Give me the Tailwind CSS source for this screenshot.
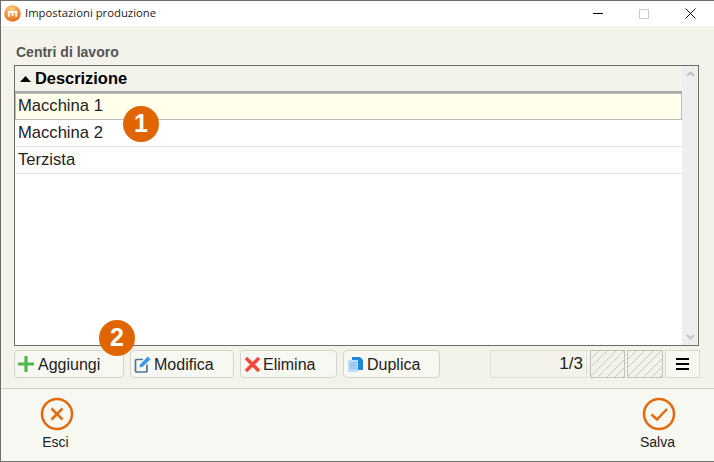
<!DOCTYPE html>
<html lang="en">
<head>
    <meta charset="UTF-8">
    <title>Impostazioni produzione</title>
    <script src="https://cdn.jsdelivr.net/npm/@tailwindcss/browser@4"></script>
</head>
<body class="m-0 overflow-hidden bg-white">
    <div class="relative w-[714px] h-[462px] flex flex-col border-t border-l border-b border-[#6e6e6e] font-['Liberation_Sans',Arial,sans-serif] text-[#111]">
        <!-- Title bar -->
        <div class="h-[25px] shrink-0 bg-white flex items-center">
            <svg class="ml-[3px] w-[17px] h-[17px]" viewBox="0 0 16 16">
                <defs>
                    <radialGradient id="logo" cx="0.45" cy="0.25" r="0.85">
                        <stop offset="0" stop-color="#ffd080"/>
                        <stop offset="1" stop-color="#dc5f0a"/>
                    </radialGradient>
                </defs>
                <circle cx="8" cy="8" r="7.8" fill="url(#logo)"/>
                <path d="M4.500 11V6.500h7V11M8 6.500V10" fill="none" stroke="#fff" stroke-width="1.700"/>
            </svg>
            <span class="ml-[4px] text-[11.3px] font-['Open_Sans',sans-serif] text-[#222]">Impostazioni produzione</span>
            <div class="ml-auto pr-[1px] flex items-center">
                <div class="w-[46px] flex justify-center"><div class="w-[10px] h-px bg-black"></div></div>
                <div class="w-[46px] flex justify-center"><div class="w-[10px] h-[10px] border border-[#ccc]"></div></div>
                <div class="w-[46px] flex justify-center">
                    <svg class="w-[11px] h-[11px]" viewBox="0 0 11 11"><path d="M.5.5l10 10M10.500.5l-10 10" stroke="#111" fill="none"/></svg>
                </div>
            </div>
        </div>

        <!-- Content -->
        <div class="flex-1 bg-[#f3f3eb] flex flex-col pl-[13px] pr-[14px]">
            <div class="h-[39px] shrink-0 pt-[18px] pl-[2px] text-[14px] leading-[17px] font-bold text-[#555]">Centri di lavoro</div>
            <!-- Table -->
            <div class="h-[281px] w-[685px] border border-[#6b6b6b] bg-white flex">
                <div class="flex-1 flex flex-col min-w-0">
                    <div class="h-[27px] shrink-0 bg-[#f3f3eb] border-b-2 border-[#a8a8a8] flex items-center pl-[5px] gap-[4px]">
                        <svg class="w-[11px] h-[6px]" viewBox="0 0 11 6"><path d="M5.500 0L11 6H0z" fill="#000"/></svg>
                        <span class="text-[16.4px] font-bold text-black">Descrizione</span>
                    </div>
                    <div class="h-[27px] shrink-0 bg-[#ffffec] border border-[#bdbdbd] flex items-center pl-[2px] text-[16.6px] text-[#222]">Macchina 1</div>
                    <div class="h-[27px] shrink-0 border-b border-[#e4e4e4] flex items-center pl-[3px] text-[16.6px] text-[#222]">Macchina 2</div>
                    <div class="h-[27px] shrink-0 border-b border-[#e4e4e4] flex items-center pl-[3px] text-[16.6px] text-[#222]">Terzista</div>
                </div>
                <!-- Scrollbar -->
                <div class="w-[16px] shrink-0 bg-[#eeeeee] flex flex-col items-center justify-between py-[5px]">
                    <svg class="w-[9px] h-[6px]" viewBox="0 0 9 6"><path d="M1 5l3.500-3.500L8 5" fill="none" stroke="#c4c4c4" stroke-width="2"/></svg>
                    <svg class="w-[9px] h-[6px]" viewBox="0 0 9 6"><path d="M1 1l3.500 3.500L8 1" fill="none" stroke="#c4c4c4" stroke-width="2"/></svg>
                </div>
            </div>
            <!-- Toolbar -->
            <div class="mt-[4px] h-[28px] flex text-[16px] text-[#222]">
                <div class="w-[110px] bg-[#f8f8f2] border border-[#d4d4cc] rounded-[4px] flex items-center pl-[3px] gap-[3px]">
                    <svg class="w-[17px] h-[17px]" viewBox="0 0 17 17"><path d="M8 0v16M0 8h16" stroke="#4fb84f" stroke-width="3.200" fill="none"/></svg>
                    <span class="mt-[2px]">Aggiungi</span>
                </div>
                <div class="ml-[6px] w-[104px] bg-[#f8f8f2] border border-[#d4d4cc] rounded-[4px] flex items-center pl-[3px] gap-[3px]">
                    <svg class="w-[17px] h-[17px]" viewBox="0 0 17 17">
                        <path d="M9 3.500H2.500a1 1 0 0 0-1 1V15a1 1 0 0 0 1 1H12a1 1 0 0 0 1-1V8.500" fill="none" stroke="#4f7492" stroke-width="1.700"/>
                        <path d="M5.500 11.500l.800-3.200L13.800.5l2.700 2.700L8.700 10.700z" fill="#3d97e8"/>
                    </svg>
                    <span class="mt-[2px]">Modifica</span>
                </div>
                <div class="ml-[6px] w-[97px] bg-[#f8f8f2] border border-[#d4d4cc] rounded-[4px] flex items-center pl-[3px] gap-[2px]">
                    <svg class="w-[17px] h-[17px]" viewBox="0 0 17 17"><path d="M2 2l13 13M15 2L2 15" stroke="#f4473a" stroke-width="3.400" fill="none"/></svg>
                    <span class="mt-[2px]">Elimina</span>
                </div>
                <div class="ml-[6px] w-[97px] bg-[#f8f8f2] border border-[#d4d4cc] rounded-[4px] flex items-center pl-[3px] gap-[3px]">
                    <svg class="w-[17px] h-[17px]" viewBox="0 0 17 17">
                        <path d="M5 1h8l3 3v10H5z" fill="#1f86d8"/>
                        <path d="M1 4h10v12H1z" fill="#bcdcfa"/>
                        <path d="M3 7h7M3 9.500h7M3 12h7" stroke="#6fb0ea" fill="none"/>
                    </svg>
                    <span class="mt-[2px]">Duplica</span>
                </div>
                <div class="ml-[50px] w-[97px] border border-[#e0e0d8] flex items-center justify-end pr-[3px] text-[17px]">1/3</div>
                <div class="ml-[3px] w-[35px] border border-[#c4c4bc] bg-[repeating-linear-gradient(135deg,#f3f3eb_0,#f3f3eb_5px,#c8c8c0_5px,#c8c8c0_6px)]"></div>
                <div class="ml-[2px] w-[36px] border border-[#c4c4bc] bg-[repeating-linear-gradient(135deg,#f3f3eb_0,#f3f3eb_5px,#c8c8c0_5px,#c8c8c0_6px)]"></div>
                <div class="ml-[2px] w-[35px] bg-[#f8f8f2] border border-[#d8d8d0] flex flex-col items-center justify-center gap-[3px]">
                    <div class="w-[13px] h-[2px] bg-black"></div>
                    <div class="w-[13px] h-[2px] bg-black"></div>
                    <div class="w-[13px] h-[2px] bg-black"></div>
                </div>
            </div>
        </div>

        <!-- Footer -->
        <div class="h-[73px] shrink-0 mt-auto bg-[#f8f8f2] border-t border-[#cfcfc7] flex justify-between pl-[25px] pr-[24px] pt-[8px]">
            <div class="w-[62px] flex flex-col items-center gap-[1px] text-[14px] text-[#222]">
                <svg class="w-[34px] h-[34px]" viewBox="0 0 34 34"><circle cx="17" cy="17" r="15" fill="none" stroke="#e36a0c" stroke-width="2.500"/><path d="M11.500 11.500l11 11M22.500 11.500l-11 11" stroke="#e36a0c" stroke-width="2.500" fill="none"/></svg>
                <span class="pr-[3px]">Esci</span>
            </div>
            <div class="w-[62px] flex flex-col items-center gap-[1px] text-[14px] text-[#222]">
                <svg class="w-[34px] h-[34px]" viewBox="0 0 34 34"><circle cx="17" cy="17" r="15" fill="none" stroke="#e36a0c" stroke-width="2.500"/><path d="M9.500 17.500l5.500 5 10-10.500" stroke="#e36a0c" stroke-width="2.500" fill="none"/></svg>
                <span class="pr-[3px]">Salva</span>
            </div>
        </div>

        <!-- Callout badges -->
        <div class="absolute left-[122px] top-[105px] w-[36px] h-[36px] rounded-full bg-[#e06500] flex items-center justify-center text-white font-bold text-[25px]">1</div>
        <div class="absolute left-[98px] top-[319px] w-[36px] h-[36px] rounded-full bg-[#e06500] flex items-center justify-center text-white font-bold text-[25px]">2</div>
    </div>
</body>
</html>
